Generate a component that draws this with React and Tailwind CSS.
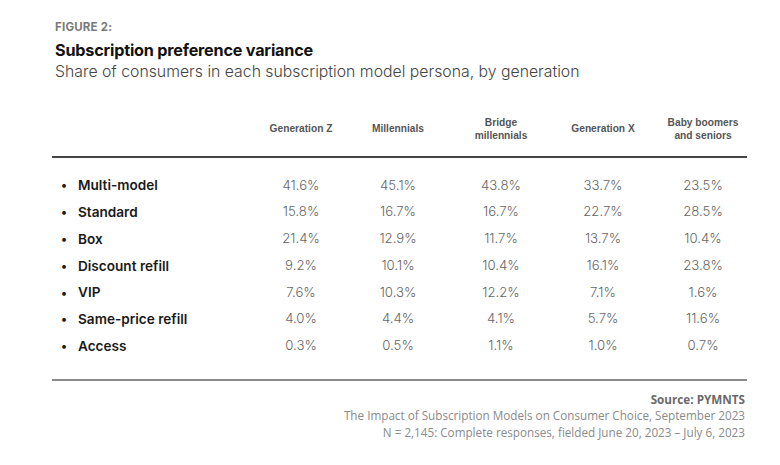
const headers = [
  ["Generation Z"],
  ["Millennials"],
  ["Bridge", "millennials"],
  ["Generation X"],
  ["Baby boomers", "and seniors"],
];

const rows = [
  ["Multi-model", "41.6%", "45.1%", "43.8%", "33.7%", "23.5%"],
  ["Standard", "15.8%", "16.7%", "16.7%", "22.7%", "28.5%"],
  ["Box", "21.4%", "12.9%", "11.7%", "13.7%", "10.4%"],
  ["Discount refill", "9.2%", "10.1%", "10.4%", "16.1%", "23.8%"],
  ["VIP", "7.6%", "10.3%", "12.2%", "7.1%", "1.6%"],
  ["Same-price refill", "4.0%", "4.4%", "4.1%", "5.7%", "11.6%"],
  ["Access", "0.3%", "0.5%", "1.1%", "1.0%", "0.7%"],
];

const cols = "grid grid-cols-[198px_102px_92px_114px_90px_110px]";

export default function App() {
  return (
    <div className="w-[780px] h-[465px] bg-white pl-[52px] pt-[20px] font-['Inter',sans-serif] overflow-hidden">
      <div className="w-[695px]">
        <div className="text-[11.5px] leading-[14px] font-bold text-[#7a7a7a] tracking-[0.2px] pl-[3px]">FIGURE 2:</div>
        <div className="mt-[6px] text-[16.2px] leading-[20px] font-bold text-[#111] pl-[3px] tracking-[-0.2px]">
          Subscription preference variance
        </div>
        <div className="mt-[2px] text-[15.8px] leading-[20px] font-light text-[#444] pl-[3px]">
          Share of consumers in each subscription model persona, by generation
        </div>

        <div className={`${cols} mt-[26px] h-[50px] pb-[7px] items-center border-b-2 border-[#454545] font-['Liberation_Sans',sans-serif]`}>
          <div />
          {headers.map((h, i) => (
            <div key={i} className="text-center text-[10.2px] leading-[13px] font-bold text-[#555]">
              {h.map((line) => (
                <div key={line}>{line}</div>
              ))}
            </div>
          ))}
        </div>

        <div className="pt-[14px] pb-[19px] border-b-2 border-[#8a8a8a]">
          {rows.map((r) => (
            <div key={r[0]} className={`${cols} h-[26.8px] items-center`}>
              <div className="flex items-center text-[13.6px] font-semibold text-[#1a1a1a]">
                <span className="ml-[9px] w-[17px] text-[12px]">•</span>
                <span>{r[0]}</span>
              </div>
              {r.slice(1).map((v, i) => (
                <div key={i} className="text-center text-[13.2px] font-light text-[#666]">
                  {v}
                </div>
              ))}
            </div>
          ))}
        </div>

        <div className="mt-[10px] text-right font-['Open_Sans',sans-serif] text-[11.7px] pr-[2px]">
          <div className="leading-[16px] font-bold text-[#6a6a6a]">Source: PYMNTS</div>
          <div className="leading-[17px] text-[#8a8a8a]">
            The Impact of Subscription Models on Consumer Choice, September 2023
          </div>
          <div className="leading-[17px] text-[#8a8a8a]">
            N = 2,145: Complete responses, fielded June 20, 2023 – July 6, 2023
          </div>
        </div>
      </div>
    </div>
  );
}
